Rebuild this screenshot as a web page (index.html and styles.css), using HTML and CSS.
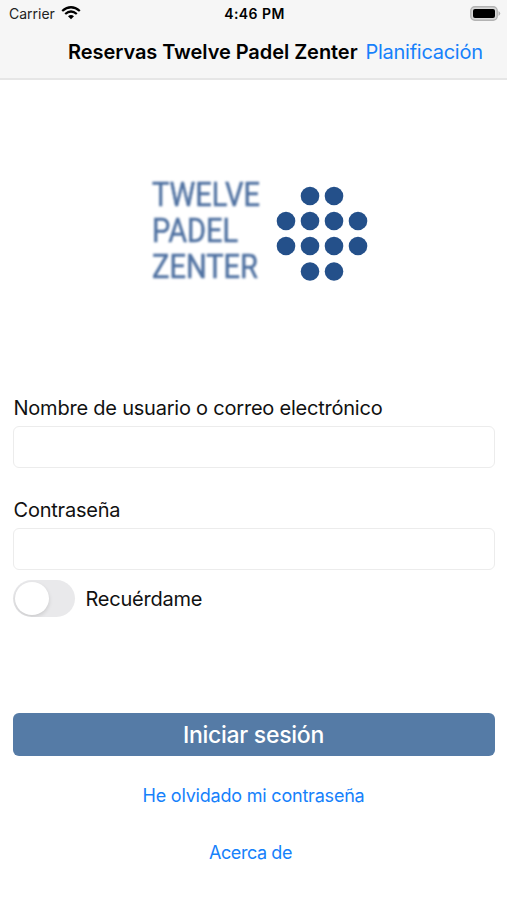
FILE: index.html
```html
<!DOCTYPE html>
<html lang="es">
<head>
<meta charset="utf-8">
<title>Reservas Twelve Padel Zenter</title>
<link rel="stylesheet" href="styles.css">
</head>
<body>
<header class="header">
  <div class="status">
    <div class="carrier"><span class="t carrier-name">Carrier</span>
      <svg width="20" height="14" viewBox="0 0 20 14" fill="none" stroke="#000" stroke-width="2.3"><path d="M1.200 5Q10-2.600 18.800 5M4.200 8Q10 3 15.800 8"/><path d="M7 10.200Q10 7.800 13 10.200L10 13.200Z" fill="#000" stroke="none"/></svg>
    </div>
    <span class="t clock">4:46 PM</span>
    <svg class="battery" width="31" height="15" viewBox="0 0 31 15"><rect x=".8" y=".8" width="26.400" height="13.400" rx="4" fill="#d8d8d8" stroke="#b3b3b3" stroke-width="1.400"/><rect x="3" y="3" width="22" height="9" rx="2"/><path d="M28.500 5q3.500 2.500 0 5z" fill="#b3b3b3"/></svg>
  </div>
  <nav class="nav"><h1 class="t title">Reservas Twelve Padel Zenter</h1><a class="t plan">Planificación</a></nav>
</header>
<main class="main">
  <div class="logo">
    <svg class="brand" width="120" height="112" viewBox="0 0 120 112"><text x="1" y="29" textLength="108" lengthAdjust="spacingAndGlyphs">TWELVE</text><text x="1" y="65" textLength="86" lengthAdjust="spacingAndGlyphs">PADEL</text><text x="1" y="101" textLength="106" lengthAdjust="spacingAndGlyphs">ZENTER</text></svg>
    <svg class="dots" width="92" height="98" viewBox="276 185 92 98" fill="#24508a"><circle cx="310" cy="196" r="9.300"/><circle cx="334" cy="196" r="9.300"/><circle cx="286" cy="221" r="9.300"/><circle cx="310" cy="221" r="9.300"/><circle cx="334" cy="221" r="9.300"/><circle cx="358" cy="221" r="9.300"/><circle cx="286" cy="246" r="9.300"/><circle cx="310" cy="246" r="9.300"/><circle cx="334" cy="246" r="9.300"/><circle cx="358" cy="246" r="9.300"/><circle cx="310" cy="271.500" r="9.300"/><circle cx="334" cy="271.500" r="9.300"/></svg>
  </div>
  <form class="form">
    <label class="t label user" for="u">Nombre de usuario o correo electrónico</label>
    <input class="field" id="u" type="text">
    <label class="t label pass" for="p">Contraseña</label>
    <input class="field" id="p" type="password">
    <div class="remember"><span class="switch"></span><span class="t label rec">Recuérdame</span></div>
    <button class="submit" type="button"><span class="t">Iniciar sesión</span></button>
  </form>
  <a class="t link forgot">He olvidado mi contraseña</a>
  <a class="t link about">Acerca de</a>
</main>
</body>
</html>
```
FILE: styles.css
```css
* { box-sizing: border-box; }
body { margin: 0; height: 900px; background: #fff; color: #000; font-family: Inter, sans-serif; overflow: hidden; }
.t { white-space: nowrap; }
.header { height: 80px; background: #f6f6f6; border-bottom: 2px solid #e6e6e6; }
.status { height: 27px; display: grid; grid-template-columns: 1fr auto 1fr; align-items: center; padding: 0 6px 0 9px; }
.carrier { display: flex; align-items: center; gap: 6px; font-size: 14px; color: #222; }
.carrier svg { margin-top: -2px; }
.clock { font-size: 14px; font-weight: 600; letter-spacing: .45px; margin-left: -1px; }
.battery { justify-self: end; margin-top: -1px; }
.nav { height: 50px; display: flex; align-items: center; padding-left: 68px; gap: 8px; }
.title { margin: 0; font-size: 20px; font-weight: 600; letter-spacing: -.06px; }
.plan { font-size: 20px; color: #1681fb; letter-spacing: -.27px; }
.main { display: flex; flex-direction: column; align-items: center; }
.logo { height: 314px; width: 507px; padding: 97px 0 0 151px; display: flex; gap: 5px; }
.brand { font-family: Roboto, sans-serif; font-size: 33px; fill: #4f71a1; stroke: #4f71a1; stroke-width: .5px; filter: blur(.8px); }
.dots { margin-top: 8px; filter: blur(.7px); overflow: visible; }
.form { width: 482px; display: flex; flex-direction: column; }
.label { font-size: 20px; line-height: 28px; letter-spacing: -.22px; padding-left: 1px; color: #111; }
.field { width: 100%; height: 42px; margin: 4px 0 0; border: 1px solid #ececec; border-radius: 6px; background: #fff; }
.pass { margin-top: 28px; }
.remember { margin-top: 10px; height: 37px; display: flex; align-items: center; gap: 10px; }
.switch { width: 62px; height: 37px; padding: 2px; border-radius: 19px; background: #e9e9eb; overflow: hidden; }
.switch::before { content: ""; display: block; width: 34px; height: 33px; border-radius: 50%; background: #fff; box-shadow: 0 2px 4px #0002; }
.submit { margin-top: 96px; height: 43px; border: 0; border-radius: 6px; background: #557ba6; color: #fff; font: 500 23px Inter, sans-serif; letter-spacing: -.28px; }
.link { font-size: 18px; line-height: 24px; color: #1681fb; letter-spacing: -.2px; }
.forgot { margin-top: 28px; }
.about { margin-top: 33px; letter-spacing: -.42px; padding-right: 6px; }
```
